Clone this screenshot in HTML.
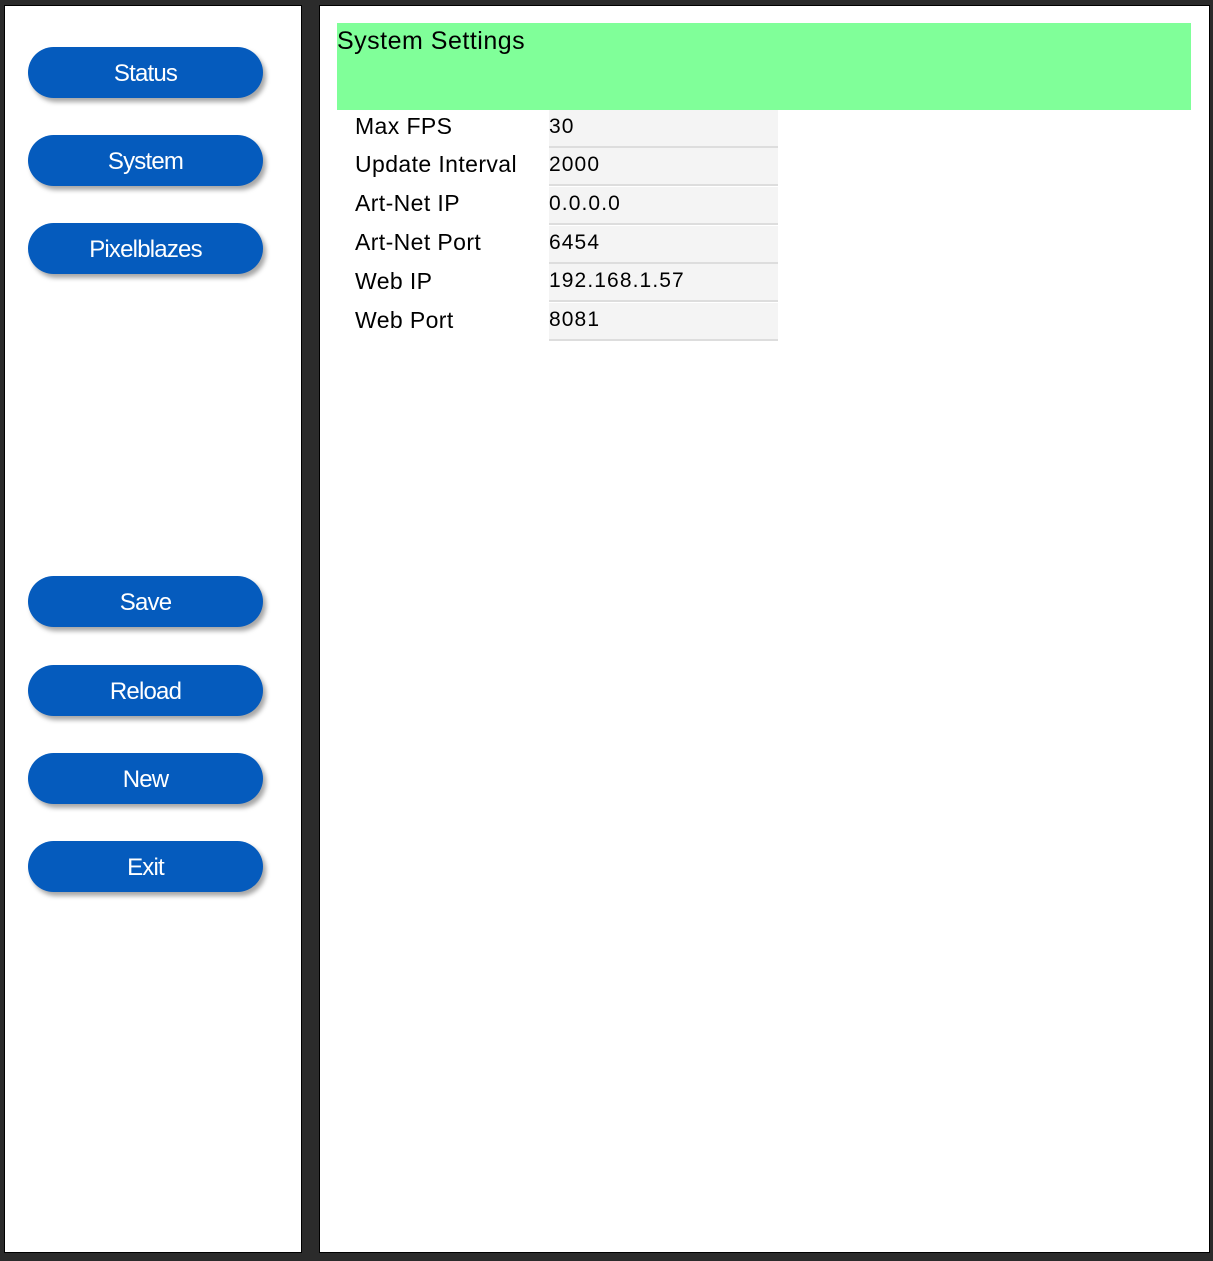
<!DOCTYPE html><html><head><style>
body{margin:0;width:1213px;height:1261px;background:#2b2b2b;position:relative;overflow:hidden;font-family:"Liberation Sans",sans-serif}
.p{position:absolute;background:#fff;border:1px solid #000}
.b{position:absolute;left:28px;width:235px;height:51px;border-radius:26px;background:#055bbd;color:#fff;font-size:24px;letter-spacing:-0.8px;text-align:center;line-height:53px;box-shadow:3px 4px 5px rgba(0,0,0,.35)}
.h{position:absolute;left:337px;top:23px;width:854px;height:87px;background:#80ff99;font-size:25px;letter-spacing:0.5px;line-height:36px;color:#000}
.l{position:absolute;left:355px;font-size:23px;letter-spacing:0.4px;color:#000}
.v{position:absolute;left:549px;width:229px;height:36px;background:#f4f4f4;border-bottom:2px solid #ddd;font-size:21px;letter-spacing:1.1px;line-height:34px;color:#000}
</style></head><body>
<div class="p" style="left:4px;top:5px;width:296px;height:1246px"></div>
<div class="p" style="left:319px;top:5px;width:889px;height:1246px"></div>
<div class="b" style="top:47px">Status</div>
<div class="b" style="top:135px">System</div>
<div class="b" style="top:223px">Pixelblazes</div>
<div class="b" style="top:576px">Save</div>
<div class="b" style="top:665px">Reload</div>
<div class="b" style="top:753px">New</div>
<div class="b" style="top:841px">Exit</div>
<div class="h">System Settings</div>
<div class="l" style="top:113px">Max FPS</div><div class="v" style="top:110px">30</div>
<div class="l" style="top:151px">Update Interval</div><div class="v" style="top:148px">2000</div>
<div class="l" style="top:190px">Art-Net IP</div><div class="v" style="top:187px">0.0.0.0</div>
<div class="l" style="top:229px">Art-Net Port</div><div class="v" style="top:226px">6454</div>
<div class="l" style="top:268px">Web IP</div><div class="v" style="top:264px">192.168.1.57</div>
<div class="l" style="top:307px">Web Port</div><div class="v" style="top:303px">8081</div>
</body></html>
